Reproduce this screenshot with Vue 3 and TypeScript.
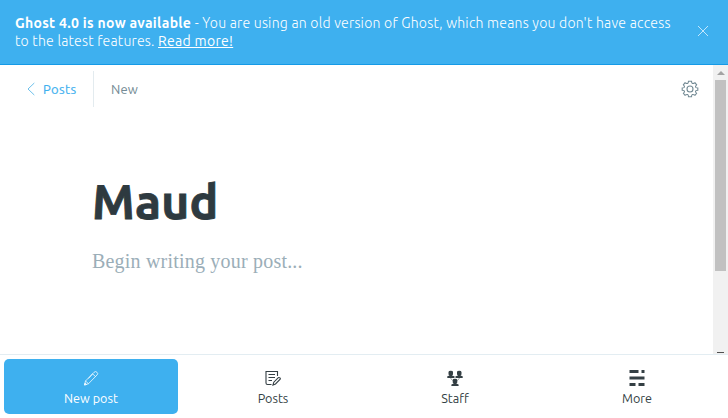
<script setup lang="ts">
import { ref } from 'vue'

type IconName = 'pen' | 'posts' | 'staff' | 'more'

interface NavItem {
  label: string
  icon: IconName
}

const items: NavItem[] = [
  { label: 'New post', icon: 'pen' },
  { label: 'Posts', icon: 'posts' },
  { label: 'Staff', icon: 'staff' },
  { label: 'More', icon: 'more' },
]
const active = ref('New post')
const title = ref('Maud')
</script>

<template>
  <div class="app">
    <aside class="alert">
      <div class="message">
        <div><b>Ghost 4.0 is now available</b><span class="lead"> - You are using an old version of Ghost, which means you don't have access</span></div>
        <div><span class="rest">to the latest features. </span><a class="link">Read more!</a></div>
      </div>
      <svg class="close" viewBox="0 0 12 12"><path d="M1 1l10 10M11 1L1 11" /></svg>
    </aside>

    <main class="main">
      <section class="editor">
        <header class="toolbar">
          <a class="back">
            <svg class="chevron" viewBox="0 0 8 14"><path d="M7.3 1L1 7l6.3 6" /></svg>
            <span>Posts</span>
          </a>
          <span class="status">New</span>
          <svg class="gear" viewBox="0 0 18 18">
            <circle cx="9" cy="9" r="3" />
            <path d="M6.6 3.4Q7.400 3 7.500 1.300h3Q10.600 3 11.400 3.400T14 2.700L15.600 4.800Q14.300 6 14.500 7t2.300 1V10.200Q14.700 10.300 14.500 11.200t1.100 2.100L14 15.300Q12.300 14.200 11.400 14.600T10.500 16.700h-3Q7.500 15 6.600 14.600T4 15.300L2.400 13.300Q3.700 12.100 3.500 11.200T1.200 10.200V8Q3.300 8 3.500 7T2.400 4.800L4 2.700Q5.700 3.800 6.600 3.400z" />
          </svg>
        </header>
        <div class="content">
          <h1 class="title">{{ title }}</h1>
          <p class="placeholder">Begin writing your post...</p>
        </div>
      </section>
      <div class="scrollbar">
        <svg class="arrow" viewBox="0 0 8 4"><path d="M0 4L4 0l4 4z" /></svg>
        <div class="thumb"></div>
        <div class="mark"></div>
      </div>
    </main>

    <nav class="nav">
      <a v-for="item in items" :key="item.label" class="item" :class="{ active: item.label === active }" @click="active = item.label">
        <svg class="icon" viewBox="0 0 16 16">
          <g v-if="item.icon === 'pen'" class="line thin">
            <path d="M1.500 15l1-4L11 2.300q1.500-1.500 3 0t0 2.700L5.500 13.700zM2.500 11l3 2.700M9.500 3.800l3 2.700M9.500 4L5.500 8.500M1.500 15l2-.5-1.500-1.500z" />
          </g>
          <g v-else-if="item.icon === 'posts'" class="line">
            <path d="M6.500 14.500H2.500q-1.500 0-1.500-1.500V1.500h11.500V6M3.500 4.500H10M3.500 7.500H10M3.500 10.500H7" />
            <path d="M8 15l.8-2.800 4.500-4.500q.8-.5 1.600.2t.1 1.600l-4.500 4.500z" />
          </g>
          <g v-else-if="item.icon === 'staff'" class="solid">
            <path d="M1.500 2q0-1.300 2.300-1.300T6 2v2.500L5 5.500 7.300 6.300V8H.3V6.300L2.500 5.500l-1-1zM10 2q0-1.300 2.200-1.300T14.500 2v2.500l-1 1 2.200.8V8h-7V6.300L11 5.500l-1-1zM5.700 10q0-1.300 2.300-1.300t2.300 1.300v2.500l-1 1 2.300.9V16H4.400v-1.600l2.300-.9-1-1z" />
            <path class="joint" d="M3.500 8L5.500 10.500M12.500 8L10.500 10.500M7 7h2" />
          </g>
          <g v-else class="solid">
            <path d="M.5 0h9v3h-9zM12.500 0h3v3h-3zM.5 6.500h15v3H.5zM.5 13h6v3h-6zM9.500 13h6v3h-6z" />
          </g>
        </svg>
        <span>{{ item.label }}</span>
      </a>
    </nav>
  </div>
</template>

<style>
body {
  margin: 0;
  overflow: hidden;
}
</style>

<style scoped>
.app {
  display: flex;
  flex-direction: column;
  width: 728px;
  height: 418px;
  background: #fff;
  color: #343f44;
  font-family: Ubuntu, "Open Sans", "Noto Sans", sans-serif;
}
.alert {
  box-sizing: border-box;
  height: 65px;
  display: flex;
  justify-content: space-between;
  padding: 14px 19px 0 15px;
  background: #3eb0ef;
  border-bottom: 1px solid #159ae6;
  color: #fff;
}
.message {
  font-size: 14px;
  font-weight: 300;
  line-height: 18px;
  white-space: pre;
}
b {
  font-weight: 700;
  letter-spacing: .3px;
}
.lead {
  letter-spacing: .23px;
}
.rest {
  letter-spacing: .22px;
}
.link {
  font-weight: 400;
  letter-spacing: .3px;
  text-decoration: underline;
  text-underline-offset: 1px;
}
.close {
  width: 12px;
  height: 12px;
  margin-top: 11px;
  fill: none;
  stroke: #e4f5ff;
  stroke-width: .8;
}
.main {
  display: flex;
  height: 289px;
}
.editor { flex: 1; }
.toolbar {
  display: flex;
  align-items: center;
  height: 36px;
  padding: 6px 14px 0 27px;
  font-size: 13px;
}
.back {
  box-sizing: border-box;
  display: flex;
  align-items: center;
  gap: 8px;
  width: 67px;
  height: 36px;
  border-right: 1px solid #e3ebef;
  color: #3eb0ef;
  letter-spacing: .4px;
  -webkit-text-stroke: .15px currentColor;
}
.chevron {
  width: 8px;
  height: 14px;
  fill: none;
  stroke: #6dc0eb;
}
.status {
  margin-left: 17px;
  color: #738a94;
  letter-spacing: .2px;
}
.gear {
  width: 18px;
  height: 18px;
  margin-left: auto;
  fill: none;
  stroke: #738a94;
  stroke-width: 1.1;
}
.content { padding: 64px 0 0 92px; }
.title {
  margin: 0;
  font-size: 48px;
  font-weight: 700;
  line-height: 60px;
  letter-spacing: .2px;
  color: #2e3a40;
  -webkit-text-stroke: .8px currentColor;
}
.placeholder {
  margin: 15px 0 0;
  font: 20px/30px "Liberation Serif", serif;
  letter-spacing: .2px;
  color: #9baeb8;
}
.scrollbar {
  display: flex;
  flex-direction: column;
  align-items: center;
  width: 15px;
  background: #f1f1f1;
}
.arrow {
  width: 8px;
  height: 4px;
  margin: 6px 0 5px;
  fill: #a3a3a3;
}
.thumb {
  width: 11px;
  height: 191px;
  background: #c1c1c1;
}
.mark {
  width: 7px;
  height: 1px;
  margin-top: auto;
  margin-bottom: 1px;
  background: #505050;
}
.nav {
  box-sizing: border-box;
  display: grid;
  grid-template-columns: repeat(4, 174px);
  gap: 8px;
  height: 64px;
  padding: 4px;
  border-top: 1px solid #e3edf2;
}
.item {
  box-sizing: border-box;
  display: flex;
  flex-direction: column;
  align-items: center;
  height: 55px;
  padding-top: 11px;
  border-radius: 5px;
  font-size: 12.6px;
  line-height: 18px;
}
.icon {
  width: 16px;
  height: 16px;
  margin-bottom: 3px;
}
.active {
  background: #3eb0ef;
  color: #fff;
}
.line {
  fill: none;
  stroke: currentColor;
  stroke-width: 1.1;
}
.thin { stroke-width: .75; }
.solid { fill: currentColor; }
.joint {
  stroke: currentColor;
  stroke-width: .5;
}
</style>
